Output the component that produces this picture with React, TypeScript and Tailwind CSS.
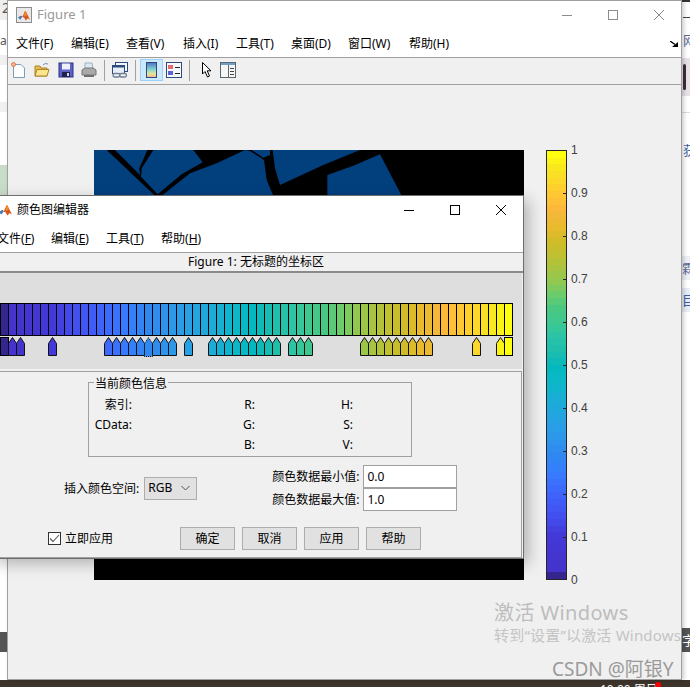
const uiFont = "font-['Noto_Sans','Noto_Sans_CJK_SC',sans-serif]";

const figureMenus = [
  { label: "文件(F)", width: "w-[55px]" },
  { label: "编辑(E)", width: "w-[55px]" },
  { label: "查看(V)", width: "w-[57px]" },
  { label: "插入(I)", width: "w-[53px]" },
  { label: "工具(T)", width: "w-[55px]" },
  { label: "桌面(D)", width: "w-[57px]" },
  { label: "窗口(W)", width: "w-[61px]" },
  { label: "帮助(H)", width: "w-[60px]" },
];

const editorMenus = [
  { name: "文件", key: "F", width: "w-[54px]" },
  { name: "编辑", key: "E", width: "w-[55px]" },
  { name: "工具", key: "T", width: "w-[55px]" },
  { name: "帮助", key: "H", width: "w-[55px]" },
];

const stops: [number, number, number, number][] = [
  [0, 0x35, 0x26, 0x8f], [1, 0x44, 0x33, 0xcc], [6, 0x43, 0x38, 0xd8], [9, 0x43, 0x50, 0xf0],
  [12, 0x3f, 0x62, 0xfb], [15, 0x37, 0x7a, 0xff], [18, 0x2f, 0x88, 0xf0], [22, 0x2a, 0x9d, 0xe8],
  [26, 0x1c, 0xac, 0xd8], [29, 0x0c, 0xb8, 0xc8], [31, 0x04, 0xb8, 0xc0], [33, 0x18, 0xbc, 0xb0],
  [36, 0x2c, 0xc4, 0xa4], [38, 0x3e, 0xc8, 0x90], [40, 0x48, 0xc8, 0x80], [42, 0x6c, 0xcc, 0x6c],
  [44, 0x90, 0xc8, 0x50], [46, 0xa8, 0xc4, 0x40], [48, 0xc0, 0xc0, 0x30], [50, 0xd0, 0xbc, 0x28],
  [52, 0xe8, 0xba, 0x2c], [54, 0xf4, 0xb8, 0x38], [55, 0xfd, 0xb8, 0x3a], [57, 0xff, 0xc8, 0x32],
  [59, 0xfc, 0xd8, 0x2a], [61, 0xf8, 0xe8, 0x1e], [63, 0xff, 0xff, 0x10],
];

const colormap = Array.from({ length: 64 }, (_, i) => {
  const end = stops.findIndex((s) => s[0] >= i);
  const b = stops[end];
  const a = stops[Math.max(end - 1, 0)];
  const t = b[0] === a[0] ? 0 : (i - a[0]) / (b[0] - a[0]);
  const mix = (n: 1 | 2 | 3) => Math.round(a[n] + (b[n] - a[n]) * t);
  return `rgb(${mix(1)},${mix(2)},${mix(3)})`;
});

const markers = new Set([
  0, 1, 2, 6, 13, 14, 15, 16, 17, 18, 19, 20, 21, 23, 26, 27, 28, 29, 30, 31, 32, 33, 34, 36, 37, 38,
  45, 46, 47, 48, 49, 50, 51, 52, 53, 59, 62, 63,
]);

const ticks = ["1", "0.9", "0.8", "0.7", "0.6", "0.5", "0.4", "0.3", "0.2", "0.1", "0"];

const MatlabLogo = ({ size }: { size: number }) => (
  <svg width={size} height={size} viewBox="0 0 16 16" className="shrink-0">
    <path d="M0 10 L4 7.5 L6 9 L9 2 Q10 0.5 11 3 L16 13 L13 11 L10.5 14 L8 10 L5 9 Z" fill="#d9551f" />
    <path d="M0 10 L4 7.5 L6 9 L5 10 L3 13 Z" fill="#3f7fb5" />
    <path d="M9 2 Q10 0.5 11 3 L12 7 L8 9 Z" fill="#f08b2a" />
  </svg>
);

const FigureIcon = () => (
  <div className="flex h-[16px] w-[16px] shrink-0 items-center justify-center border border-[#8c8c8c] bg-[#e8e8e8] pt-[1px]">
    <MatlabLogo size={12} />
  </div>
);

const Marker = ({ index }: { index: number }) => {
  const fill = colormap[index];
  if (index === 0 || index === 63) {
    return (
      <svg width="9" height="19" className="mr-[-1px] shrink-0">
        <rect x="0.5" y="0.5" width="8" height="18" fill={fill} stroke="#000" />
      </svg>
    );
  }
  if (index === 18) {
    return (
      <svg width="9" height="21" className="mr-[-1px] shrink-0">
        <path d="M0.5 19.5 V6.5 L4.5 0.5 L8.5 6.5 V19.5 Z" fill={fill} stroke="#000" strokeDasharray="1 1" />
      </svg>
    );
  }
  return (
    <svg width="9" height="19" className="mr-[-1px] shrink-0">
      <path d="M0.5 18.5 V6.5 L4.5 0.5 L8.5 6.5 V18.5 Z" fill={fill} stroke="#111" />
    </svg>
  );
};

const Toolbar = () => (
  <div className="flex h-[27px] items-center border-b border-[#a0a0a0] bg-[#f0f0f0] pb-[2px] pl-[3px]">
    <svg width="16" height="16" viewBox="0 0 16 16">
      <path d="M2.5 2.5 H10 L13.5 6 V15.5 H2.5 Z" fill="#fbfdff" stroke="#7f9db9" />
      <circle cx="2.5" cy="2.5" r="2" fill="#f5b99b" stroke="#e0602a" strokeWidth="0.8" />
    </svg>
    <svg width="16" height="16" viewBox="0 0 16 16" className="ml-[7px]">
      <path d="M1 4 H6 L7 6 H13 V14 H1 Z" fill="#e9bc4c" stroke="#a9852c" />
      <path d="M1 14 L3 7.5 H15 L13 14 Z" fill="#fde58c" stroke="#a9852c" />
      <path d="M9 3 Q11 0.5 14 2" fill="none" stroke="#6f8fb0" />
    </svg>
    <svg width="16" height="16" viewBox="0 0 16 16" className="ml-[8px]">
      <rect x="1" y="1" width="14" height="14" fill="#5d62c5" stroke="#2d3080" />
      <rect x="4" y="1.5" width="8" height="6" fill="#eef0fa" />
      <rect x="4" y="10" width="8" height="5" fill="#1e2050" />
      <rect x="9" y="11" width="2" height="3" fill="#d8d8e8" />
    </svg>
    <svg width="16" height="16" viewBox="0 0 16 16" className="ml-[7px]">
      <path d="M4 7 V1 H11 L12 7 Z" fill="#dfe9f4" stroke="#9fb0c0" />
      <path d="M1 8 L4 6 H12 L15 8 V13 H1 Z" fill="#a9a9a9" stroke="#777" />
      <path d="M3 13 H13 V15 H3 Z" fill="#6f6f6f" />
    </svg>
    <div className="ml-[7px] h-[21px] w-px bg-[#a0a0a0]" />
    <svg width="16" height="16" viewBox="0 0 16 16" className="ml-[7px]">
      <rect x="3.5" y="0.5" width="12" height="9" fill="#f4f7fb" stroke="#2d4a7d" />
      <rect x="0.5" y="3.5" width="12" height="8" fill="#e8eef6" stroke="#2d4a7d" />
      <rect x="1" y="4" width="11" height="1.5" fill="#2d4a7d" />
      <rect x="1" y="11.5" width="7" height="3.5" rx="1.7" fill="none" stroke="#6e7f96" strokeWidth="1.3" />
      <rect x="7.5" y="11.5" width="7" height="3.5" rx="1.7" fill="none" stroke="#6e7f96" strokeWidth="1.3" />
    </svg>
    <div className="ml-[7px] h-[21px] w-px bg-[#a0a0a0]" />
    <div className="ml-[4px] flex h-[22px] w-[23px] items-center justify-center border border-[#99d1ff] bg-[#cce8ff]">
      <svg width="11" height="16" viewBox="0 0 11 16">
        <defs>
          <linearGradient id="bar" x1="0" y1="0" x2="0" y2="1">
            <stop offset="0" stopColor="#4f6fc5" />
            <stop offset="0.45" stopColor="#7fd3d0" />
            <stop offset="0.75" stopColor="#e3e59a" />
            <stop offset="1" stopColor="#f2b58a" />
          </linearGradient>
        </defs>
        <rect x="0.5" y="0.5" width="10" height="15" fill="url(#bar)" stroke="#2d4a7d" />
      </svg>
    </div>
    <svg width="16" height="16" viewBox="0 0 16 16" className="ml-[3px]">
      <rect x="0.5" y="0.5" width="15" height="15" fill="#f6f8fb" stroke="#2d4a7d" />
      <rect x="2" y="3" width="5" height="4" fill="#e86a6a" />
      <rect x="2" y="9" width="5" height="4" fill="#5a63d8" />
      <rect x="9" y="5" width="5" height="1" fill="#222" />
      <rect x="9" y="11" width="5" height="1" fill="#222" />
    </svg>
    <div className="ml-[7px] h-[21px] w-px bg-[#a0a0a0]" />
    <svg width="10" height="16" viewBox="0 0 10 16" className="ml-[12px]">
      <path d="M0.5 0.5 V12 L3 9.5 L5.5 15 L7.5 14 L5.2 8.8 L9 8.8 Z" fill="#fff" stroke="#000" />
    </svg>
    <svg width="16" height="16" viewBox="0 0 16 16" className="ml-[8px]">
      <rect x="0.5" y="0.5" width="15" height="15" fill="#f6f6f6" stroke="#5a6672" />
      <rect x="1" y="1" width="14" height="2" fill="#6f9fc8" />
      <rect x="8" y="3" width="1" height="12" fill="#5a6672" />
      <rect x="10" y="6" width="4" height="1" fill="#444" />
      <rect x="10" y="9" width="4" height="1" fill="#444" />
      <rect x="10" y="12" width="4" height="1" fill="#444" />
    </svg>
  </div>
);

const WindowControls = ({ tone }: { tone: string }) => (
  <div className="ml-auto flex items-center gap-[36px]">
    <svg width="10" height="10" viewBox="0 0 10 10">
      <path d="M0 5.5 H10" stroke={tone} />
    </svg>
    <svg width="10" height="10" viewBox="0 0 10 10">
      <rect x="0.5" y="0.5" width="9" height="9" fill="none" stroke={tone} />
    </svg>
    <svg width="10" height="10" viewBox="0 0 10 10">
      <path d="M0 0 L10 10 M10 0 L0 10" stroke={tone} />
    </svg>
  </div>
);

const FigureImage = () => (
  <svg width="430" height="430" viewBox="12 15 1290 1290" className="shrink-0 bg-black">
    <path d="M12 15 H50 L195 152 H12 Z" fill="#023f7d" />
    <path d="M75 15 H172 L148 70 L150 90 Z" fill="#023f7d" />
    <path d="M190 15 H310 L338 52 L275 88 L203 148 L153 95 L155 70 Z" fill="#023f7d" />
    <path d="M465 15 L480 18 L522 45 L530 105 L550 152 H215 L300 85 L380 55 Z" fill="#023f7d" />
    <path d="M485 15 H540 V30 L520 38 Z" fill="#023f7d" />
    <path d="M548 15 H810 L700 60 L570 120 L555 70 Z" fill="#023f7d" />
    <path d="M712 90 L790 62 L870 28 L935 152 H712 Z" fill="#023f7d" />
  </svg>
);

const Colorbar = () => (
  <div className="relative ml-[22px] h-[430px] w-[21px] shrink-0 border border-[#262626]">
    <div className="flex h-full flex-col-reverse">
      {colormap.map((color) => (
        <div key={color} className="flex-1" style={{ backgroundColor: color }} />
      ))}
    </div>
    <div className="absolute inset-[-1px] flex flex-col justify-between">
      {ticks.map((tick) => (
        <div key={tick} className="relative flex h-0 items-center justify-end">
          {tick !== "1" && tick !== "0" && <div className="h-px w-[4px] bg-[#262626]" />}
          <span className="absolute left-[25px] font-['Liberation_Sans',sans-serif] text-[12px] text-[#404040]">{tick}</span>
        </div>
      ))}
    </div>
  </div>
);

const FigureWindow = () => (
  <div className="absolute left-[7px] top-0 flex h-[680px] w-[675px] flex-col border border-[#a0a0a0] bg-[#f0f0f0] shadow-[2px_0_4px_rgba(0,0,0,0.2)]">
    <div className="flex h-[28px] shrink-0 items-center bg-white pl-[8px] pr-[17px]">
      <FigureIcon />
      <span className="ml-[5px] text-[13px] text-[#999999]">Figure 1</span>
      <WindowControls tone="#8c8c8c" />
    </div>
    <div className="relative flex h-[29px] shrink-0 items-center border-b border-[#a0a0a0] bg-white pl-[8px] pt-[2px] text-[12px] text-black">
      {figureMenus.map((menu) => (
        <span key={menu.label} className={menu.width}>{menu.label}</span>
      ))}
      <svg width="8" height="6" viewBox="0 0 8 6" className="absolute left-[662px] top-[12px]">
        <path d="M0 0 L5 3.5" stroke="#000" strokeWidth="1.4" />
        <path d="M8 6 H2 L8 1 Z" fill="#000" />
      </svg>
    </div>
    <Toolbar />
    <div className="flex pl-[86px] pt-[65px]">
      <FigureImage />
      <Colorbar />
    </div>
  </div>
);

const DialogButton = ({ label }: { label: string }) => (
  <button className="h-[23px] w-[55px] border border-[#adadad] bg-[#e1e1e1] text-[12px] text-black">{label}</button>
);

const ColorInfo = ({ text }: { text: string }) => <span className="text-right">{text}</span>;

const ColormapEditor = () => (
  <div className="absolute left-[-10px] top-[195px] flex h-[364px] w-[534px] flex-col border-r border-b border-t border-[#6e6e6e] bg-[#f0f0f0] shadow-[5px_5px_14px_rgba(0,0,0,0.25)]">
    <div className="flex h-[28px] shrink-0 items-center bg-white pl-[9px] pr-[17px]">
      <MatlabLogo size={13} />
      <span className="ml-[5px] text-[12px] text-black">颜色图编辑器</span>
      <WindowControls tone="#000000" />
    </div>
    <div className="flex h-[29px] shrink-0 items-center border-b border-[#a0a0a0] bg-white pl-[7px] pt-[2px] text-[12px]">
      {editorMenus.map((menu) => (
        <span key={menu.key} className={menu.width}>
          {menu.name}(<span className="underline">{menu.key}</span>)
        </span>
      ))}
    </div>
    <div className="flex h-[20px] shrink-0 items-center justify-center border-b-2 border-[#8a8a8a] pr-[1px] text-[12px] text-black">
      Figure 1: 无标题的坐标区
    </div>
    <div className="mr-[1px] flex h-[96px] shrink-0 flex-col bg-[#dedede] pl-[10px] pt-[30px]">
      <div className="flex h-[33px] w-[513px] border-y border-l border-black">
        {colormap.map((color) => (
          <div key={color} className="w-2 shrink-0 border-r border-black" style={{ backgroundColor: color }} />
        ))}
      </div>
      <div className="mt-[1px] flex">
        {colormap.map((color, i) =>
          markers.has(i) ? <Marker key={color} index={i} /> : <div key={color} className="w-2 shrink-0" />,
        )}
      </div>
    </div>
    <div className="mr-[1px] mt-[2px] h-[187px] shrink-0 border border-[#a0a0a0] text-[12px] text-black">
      <div className="relative ml-[97px] mt-[10px] h-[75px] w-[324px] border border-[#a0a0a0] pt-[12px]">
        <span className="absolute left-[5px] top-[-6px] bg-[#f0f0f0] px-[1px] leading-[14px]">当前颜色信息</span>
        <div className="grid auto-rows-[20px] grid-cols-[43px_123px_98px] items-center">
          <ColorInfo text="索引:" />
          <ColorInfo text="R:" />
          <ColorInfo text="H:" />
          <ColorInfo text="CData:" />
          <ColorInfo text="G:" />
          <ColorInfo text="S:" />
          <ColorInfo text="" />
          <ColorInfo text="B:" />
          <ColorInfo text="V:" />
        </div>
      </div>
      <div className="ml-[73px] mt-[8px] flex h-[46px] items-center">
        <span className="pt-[2px]">插入颜色空间:</span>
        <div className="ml-[5px] flex h-[23px] w-[53px] items-center justify-between border border-[#adadad] bg-[#e1e1e1] pl-[3px] pr-[6px]">
          <span>RGB</span>
          <svg width="9" height="6" viewBox="0 0 9 6">
            <path d="M0.5 1 L4.5 5 L8.5 1" fill="none" stroke="#555" />
          </svg>
        </div>
        <div className="ml-[75px] flex flex-col">
          <div className="flex h-[23px] items-center gap-[4px]">
            <span>颜色数据最小值:</span>
            <div className="flex h-[23px] w-[94px] items-center border border-[#a0a0a0] bg-white pl-[3px] text-[12px]">0.0</div>
          </div>
          <div className="flex h-[23px] items-center gap-[4px]">
            <span>颜色数据最大值:</span>
            <div className="flex h-[23px] w-[94px] items-center border border-[#a0a0a0] bg-white pl-[3px] text-[12px]">1.0</div>
          </div>
        </div>
      </div>
      <div className="ml-[57px] mt-[16px] flex h-[23px] items-center">
        <div className="flex h-[13px] w-[13px] items-center justify-center border border-[#333333] bg-white">
          <svg width="11" height="9" viewBox="0 0 11 9">
            <path d="M1 4.5 L4 7.5 L10 1" fill="none" stroke="#555" strokeWidth="1.1" />
          </svg>
        </div>
        <span className="ml-[4px] w-[48px]">立即应用</span>
        <div className="ml-[67px] flex gap-[7px]">
          <DialogButton label="确定" />
          <DialogButton label="取消" />
          <DialogButton label="应用" />
          <DialogButton label="帮助" />
        </div>
      </div>
    </div>
  </div>
);

const DesktopBehind = () => (
  <>
    <div className="absolute left-0 top-0 h-[20px] w-[7px] overflow-hidden bg-[#eeeeee] text-[14px] leading-[16px] text-[#555555]">
      <span className="ml-[2px]">2</span>
    </div>
    <div className="absolute left-0 top-[34px] w-[7px] overflow-hidden text-[12px] leading-[14px] text-[#555555]">a4</div>
    <div className="absolute left-0 top-[55px] h-[10px] w-[7px] bg-[#f0f0f0]" />
    <div className="absolute left-0 top-[102px] h-[10px] w-[7px] bg-[#f0f0f0]" />
    <div className="absolute left-0 top-[165px] h-[30px] w-[7px] bg-[#c8dcc8]" />
    <div className="absolute left-0 top-[632px] h-[20px] w-[7px] bg-[#555555]" />
    <div className="absolute left-[682px] top-0 h-[2px] w-[8px] bg-[#333333]" />
    <div className="absolute left-[683px] top-[17px] h-px w-[7px] bg-[#444444]" />
    <div className="absolute left-[683px] top-[33px] text-[13px] leading-[14px] text-[#5a6a9a]">网</div>
    <div className="absolute left-[682px] top-[58px] h-[38px] w-[8px] bg-[#e9e0e8]">
      <div className="ml-[1px] mt-[6px] h-[26px] w-[3px] rounded-full bg-[#3a2f3a]" />
    </div>
    <div className="absolute left-[682px] top-[112px] h-px w-[8px] bg-[#dddddd]" />
    <div className="absolute left-[683px] top-[143px] text-[13px] leading-[14px] text-[#3a5fa5]">获</div>
    <div className="absolute left-[682px] top-[256px] h-[24px] w-[8px] bg-[#eef0f6] text-[13px] leading-[24px] text-[#5a6a9a]">霖</div>
    <div className="absolute left-[682px] top-[288px] h-[24px] w-[8px] bg-[#e8ecf6] text-[13px] leading-[24px] text-[#3a5fa5]">目</div>
    <div className="absolute left-[682px] top-[628px] h-[24px] w-[8px] bg-[#555555] text-[13px] leading-[24px] text-white">字</div>
    <div className="absolute bottom-0 left-0 h-[7px] w-[690px] overflow-hidden bg-[#3d342c]">
      <span className="absolute left-[600px] top-[3px] text-[12px] leading-[14px] text-white">10:00 周日</span>
      <div className="absolute left-[655px] top-[2px] h-[6px] w-[6px] rounded-full bg-[#ff0000]" />
    </div>
  </>
);

const Watermarks = () => (
  <>
    <div className="absolute left-[494px] top-[598px] text-[20px] leading-[30px] tracking-[0.4px] text-[#bdbdbd]">激活 Windows</div>
    <div className="absolute left-[494px] top-[625px] whitespace-nowrap text-[15px] leading-[20px] tracking-[0.2px] text-[#c4c4c4]">转到“设置”以激活 Windows</div>
    <div className="absolute left-[552px] top-[656px] whitespace-nowrap text-[19px] leading-[26px] text-[#9a9a9a]">CSDN @阿银Y</div>
  </>
);

export default function App() {
  return (
    <div className={`relative h-[687px] w-[690px] overflow-hidden bg-white ${uiFont}`}>
      <DesktopBehind />
      <FigureWindow />
      <ColormapEditor />
      <Watermarks />
    </div>
  );
}
